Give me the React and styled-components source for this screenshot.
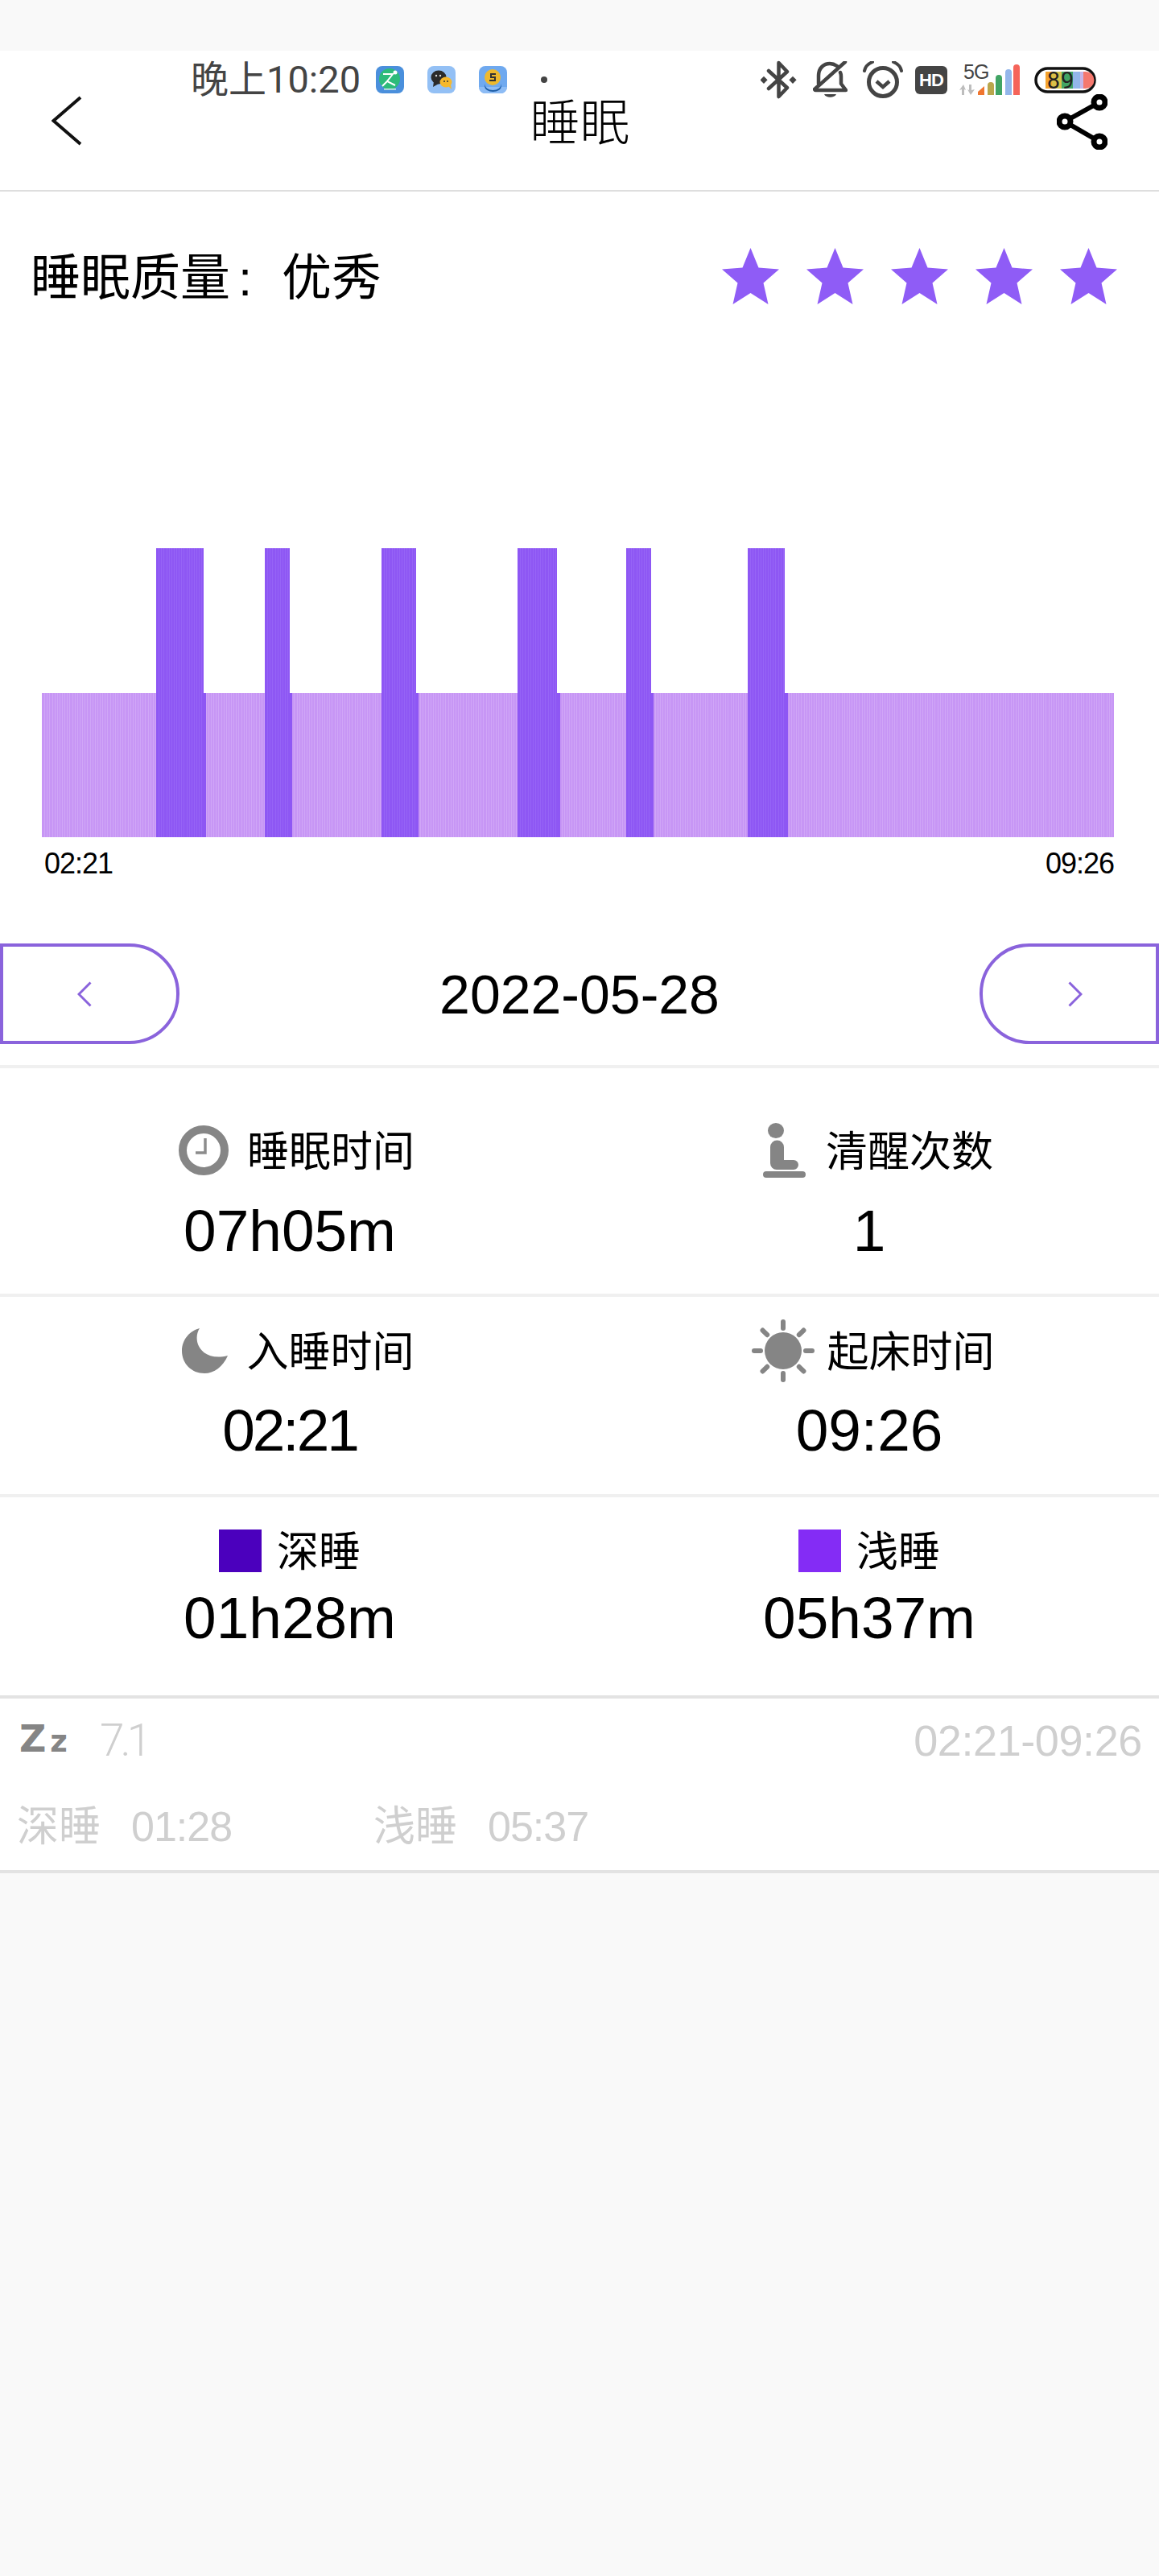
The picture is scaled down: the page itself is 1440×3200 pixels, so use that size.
import React from "react";
import styled, { createGlobalStyle } from "styled-components";

const SANS = `"Liberation Sans", "Noto Sans CJK SC", sans-serif`;

const GlobalStyle = createGlobalStyle`
  html, body {
    margin: 0;
    padding: 0;
    background: #f9f9f9;
    font-family: ${SANS};
    color: #000;
  }
`;

// Page
const Page = styled.div`
  position: relative;
  width: 1440px;
  height: 3200px;
  padding-top: 63px;
  box-sizing: border-box;
  overflow: hidden;
`;

const Sheet = styled.div`
  background: #fff;
`;

// Status bar lies over the app header, like the phone's own overlay
const StatusBar = styled.div`
  position: absolute;
  top: 75px;
  left: 237px;
  width: 1125px;
  height: 48px;
  display: flex;
  align-items: center;
  justify-content: space-between;
`;

const StatusLeft = styled.div`
  display: flex;
  align-items: center;
`;

const StatusTime = styled.span`
  font-family: Roboto, "Noto Sans CJK SC", sans-serif;
  font-size: 47px;
  line-height: 48px;
  color: #444;
  width: 230px;
  white-space: nowrap;
`;

const AppIcons = styled.div`
  display: flex;
  align-items: center;
  gap: 29px;
`;

const StatusDot = styled.span`
  width: 8px;
  height: 8px;
  border-radius: 50%;
  background: #444;
  margin-left: 42px;
`;

const StatusRight = styled.div`
  display: flex;
  align-items: center;
`;

const HdBadge = styled.span`
  width: 40px;
  height: 35px;
  margin: 0 15px;
  border-radius: 6px;
  background: #444;
  color: #fff;
  font-size: 22px;
  font-weight: 700;
  line-height: 35px;
  text-align: center;
  letter-spacing: -1px;
`;

const SignalBox = styled.div`
  position: relative;
  width: 76px;
  height: 42px;
  margin-right: 17px;
`;

const FiveG = styled.span`
  position: absolute;
  left: 5px;
  top: -1px;
  font-size: 25px;
  line-height: 24px;
  color: #444;
  letter-spacing: -1px;
`;

// Header
const Header = styled.header`
  height: 173px;
  padding: 0 64px;
  display: flex;
  align-items: center;
  justify-content: space-between;
  border-bottom: 2px solid #dedede;
`;

const PageTitle = styled.h1`
  margin: 0;
  font-size: 62px;
  font-weight: 300;
  line-height: 62px;
  padding: 8px 0 0 26px;
`;

// Quality
const QualityRow = styled.div`
  padding: 70px 52px 0 38px;
  display: flex;
  align-items: flex-start;
  justify-content: space-between;
`;

const QualityText = styled.div`
  font-size: 62px;
  line-height: 70px;
  white-space: nowrap;
  padding-top: 3px;
`;

const Colon = styled.span`
  display: inline-block;
  width: 64px;
  padding-left: 10px;
  box-sizing: border-box;
`;

const Stars = styled.div`
  display: flex;
  gap: 34px;
`;

// Chart
const ChartWrap = styled.div`
  margin: 300px 56px 0 52px;
  height: 359px;
`;

const ChartLabels = styled.div`
  height: 66px;
  padding: 0 56px 0 55px;
  display: flex;
  align-items: center;
  justify-content: space-between;
  font-size: 36px;
  letter-spacing: -1px;
`;

// Date
const DateRow = styled.div`
  padding: 66px 0 26px;
  display: flex;
  align-items: center;
  justify-content: space-between;
`;

const NavButton = styled.div`
  width: 223px;
  height: 125px;
  box-sizing: border-box;
  border: 4px solid #8a63dc;
  border-radius: ${(p) => (p.$side === "left" ? "0 62px 62px 0" : "62px 0 0 62px")};
  display: flex;
  align-items: center;
  justify-content: center;
  padding: ${(p) => (p.$side === "left" ? "0 14px 0 0" : "0 0 0 14px")};
`;

const DateText = styled.div`
  font-size: 68px;
  line-height: 80px;
`;

const Divider = styled.div`
  height: 4px;
  background: ${(p) => p.$color || "#f0f0f0"};
`;

// Stats
const StatRow = styled.div`
  height: ${(p) => p.$height}px;
  padding-top: ${(p) => p.$top}px;
  box-sizing: border-box;
  display: grid;
  grid-template-columns: 1fr 1fr;
`;

const Stat = styled.div`
  display: flex;
  flex-direction: column;
  align-items: center;
`;

const StatHead = styled.div`
  height: 68px;
  display: flex;
  align-items: center;
  gap: ${(p) => p.$gap || 25}px;
  padding-left: ${(p) => p.$shift || 0}px;
  font-size: 52px;
  white-space: nowrap;
`;

const HeadLabel = styled.span`
  padding-bottom: 6px;
`;

const IconSlot = styled.span`
  width: ${(p) => p.$w}px;
  display: flex;
  justify-content: center;
`;

const Swatch = styled.span`
  width: 53px;
  height: 53px;
  background: ${(p) => p.$color};
`;

const StatValue = styled.div`
  font-size: 73px;
  line-height: 80px;
  margin-top: ${(p) => p.$top}px;
  letter-spacing: ${(p) => p.$tight || 0}px;
`;

// Record list
const Record = styled.div`
  height: 213px;
  box-sizing: border-box;
  padding: 22px 21px 0 21px;
  color: #cfcfcf;
`;

const RecordTop = styled.div`
  height: 60px;
  display: flex;
  align-items: center;
  justify-content: space-between;
`;

const RecordScore = styled.div`
  display: flex;
  align-items: center;
`;

const ZzMark = styled.span`
  width: 103px;
  padding-left: 3px;
  box-sizing: border-box;
  font-family: "DejaVu Sans", sans-serif;
  font-size: 46px;
  font-weight: 700;
  line-height: 60px;
  color: #858585;
  white-space: nowrap;
`;

const SmallZ = styled.span`
  font-size: 37px;
  margin-left: 5px;
`;

const ScoreText = styled.span`
  font-family: Roboto, sans-serif;
  font-size: 55px;
  font-weight: 300;
  letter-spacing: -5px;
`;

const RecordRange = styled.span`
  font-size: 54px;
  line-height: 60px;
  letter-spacing: -0.4px;
`;

const RecordBottom = styled.div`
  height: 60px;
  margin-top: 47px;
  display: flex;
  align-items: center;
`;

const RecordPart = styled.div`
  width: 443px;
  display: flex;
  gap: 38px;
  font-size: 52px;
  line-height: 60px;
  white-space: nowrap;
`;

const RecordTime = styled.span`
  font-size: 52px;
  letter-spacing: -1px;
`;

// Drawings
const MINUTE = 1332 / 425;
const DEEP = [
  [142, 201, 204],
  [277, 307.5, 311],
  [422, 464.5, 468],
  [591, 640, 643.5],
  [726, 757, 760],
  [877, 923, 926.5],
];

function SleepChart() {
  const lines = [];
  for (let i = 1; i < 425; i++) {
    lines.push(<rect key={i} x={Math.round(i * MINUTE)} y="180" width="1" height="179" fill="#d0a6f7" />);
  }
  const deep = [];
  DEEP.forEach(([a, b, c], k) => {
    deep.push(<rect key={`t${k}`} x={a} y="0" width={b - a} height="180" fill="#8e57f4" />);
    deep.push(<rect key={`b${k}`} x={a} y="180" width={c - a} height="179" fill="#8e57f4" />);
    for (let x = a + MINUTE; x < b; x += MINUTE) {
      deep.push(<rect key={`l${k}-${x}`} x={Math.round(x)} y="0" width="1" height="359" fill="#9664f6" />);
    }
  });
  return (
    <svg width="1332" height="359" viewBox="0 0 1332 359" shapeRendering="crispEdges" style={{ display: "block" }}>
      <rect x="0" y="180" width="1332" height="179" fill="#c796f5" />
      {lines}
      {deep}
    </svg>
  );
}

const Star = () => (
  <svg width="71" height="70" viewBox="0 0 71 70">
    <path d="M35.5 0 L45.5 24.5 L71 26.5 L51.5 43.5 L57.5 70 L35.5 56 L13.5 70 L19.5 43.5 L0 26.5 L25.5 24.5 Z" fill="#8f5cf6" />
  </svg>
);

const BackIcon = () => (
  <svg width="38" height="62" viewBox="0 0 38 62">
    <path d="M36 2 L2.5 31 L36 60" fill="none" stroke="#111" strokeWidth="4" />
  </svg>
);

const ShareIcon = () => (
  <svg width="63" height="69" viewBox="0 0 63 69" style={{ marginBottom: -4 }}>
    <path d="M53 10 L10 34 L53 59" fill="none" stroke="#000" strokeWidth="6" />
    <circle cx="53" cy="10" r="7" fill="#fff" stroke="#000" strokeWidth="7" />
    <circle cx="10" cy="34" r="7" fill="#fff" stroke="#000" strokeWidth="7" />
    <circle cx="53" cy="59" r="7" fill="#fff" stroke="#000" strokeWidth="7" />
  </svg>
);

const Chevron = ({ flip }) => (
  <svg width="18" height="32" viewBox="0 0 18 32" style={flip ? { transform: "scaleX(-1)" } : undefined}>
    <path d="M16.5 1.5 L2 16 L16.5 30.5" fill="none" stroke="#8a63dc" strokeWidth="3" />
  </svg>
);

const ClockIcon = () => (
  <svg width="62" height="62" viewBox="0 0 62 62">
    <circle cx="31" cy="31" r="26" fill="none" stroke="#868686" strokeWidth="10" />
    <path d="M33 16 V34 H21" fill="none" stroke="#8c8c8c" strokeWidth="3.5" />
  </svg>
);

const SeatIcon = () => (
  <svg width="53" height="68" viewBox="0 0 53 68">
    <ellipse cx="16" cy="9.5" rx="10" ry="9.5" fill="#858585" />
    <path d="M9 30 a8.5 8.5 0 0 1 17 0 V46 H38 a6 6 0 0 1 6 6 a6 6 0 0 1 -6 6 H17 a8 8 0 0 1 -8 -8 Z" fill="#858585" />
    <rect x="0" y="60" width="53" height="8" rx="4" fill="#858585" />
  </svg>
);

const MoonIcon = () => (
  <svg width="57" height="56" viewBox="0 0 57 56">
    <path d="M22 0 C12 16 24 42 57 34 C51 48 40 56 28 56 C12 56 0 44 0 28 C0 14 10 3 22 0 Z" fill="#858585" />
  </svg>
);

const SunIcon = () => {
  const rays = [0, 45, 90, 135, 180, 225, 270, 315];
  return (
    <svg width="78" height="78" viewBox="0 0 78 78">
      <circle cx="39" cy="39" r="23" fill="#858585" />
      {rays.map((r) => (
        <line key={r} x1="39" y1="3" x2="39" y2="11" stroke="#858585" strokeWidth="6" strokeLinecap="round" transform={`rotate(${r} 39 39)`} />
      ))}
    </svg>
  );
};

const RunApp = () => (
  <svg width="35" height="34" viewBox="0 0 35 34">
    <rect width="35" height="34" rx="8" fill="#4a8fdc" />
    <circle cx="17" cy="16" r="13" fill="#2dbb7a" />
    <circle cx="24" cy="8" r="2.5" fill="#fff" />
    <path d="M9 10 H21 L14 19 L24 24 M14 19 L8 25" fill="none" stroke="#fff" strokeWidth="2" />
    <rect x="10" y="28" width="15" height="1.5" fill="#d8f5e6" />
  </svg>
);

const ChatApp = () => (
  <svg width="35" height="34" viewBox="0 0 35 34">
    <rect width="35" height="34" rx="8" fill="#93c0f5" />
    <ellipse cx="14" cy="14" rx="9.5" ry="8.5" fill="#2b2b2b" />
    <path d="M8 19 L7 26 L14 22 Z" fill="#2b2b2b" />
    <ellipse cx="23" cy="20" rx="7.5" ry="6.5" fill="#f5b82e" />
    <path d="M26 25 L30 29 L29 23 Z" fill="#f5b82e" />
    <circle cx="21" cy="19" r="1" fill="#333" />
    <circle cx="25" cy="19" r="1" fill="#333" />
    <circle cx="11" cy="12" r="1.2" fill="#ddd" />
    <circle cx="16" cy="12" r="1.2" fill="#ddd" />
  </svg>
);

const CoinApp = () => (
  <svg width="35" height="34" viewBox="0 0 35 34">
    <rect width="35" height="34" rx="8" fill="#6fa9ef" />
    <path d="M0 26 H35 V26 a8 8 0 0 1 -8 8 H8 a8 8 0 0 1 -8 -8 Z" fill="#8dbcf5" />
    <path d="M7 22 a10.5 8 0 0 0 21 0 L28 25 a10.5 7 0 0 1 -21 0 Z" fill="#1f5fa8" />
    <circle cx="17" cy="14" r="10" fill="#eeb92e" />
    <path d="M21 10 H15 V14 H20 V18 H13" fill="none" stroke="#333" strokeWidth="2" />
  </svg>
);

const BluetoothIcon = () => (
  <svg width="45" height="48" viewBox="0 0 45 48" style={{ marginRight: 20 }}>
    <path d="M10 13 L33 34 L22.5 45 V3 L33 14 L10 35" fill="none" stroke="#444" strokeWidth="4.5" strokeLinejoin="round" strokeLinecap="round" />
    <rect x="1" y="21" width="6.5" height="6.5" transform="rotate(45 4 24)" fill="#444" />
    <rect x="37" y="21" width="6.5" height="6.5" transform="rotate(45 40 24)" fill="#444" />
  </svg>
);

const BellOffIcon = () => (
  <svg width="43" height="46" viewBox="0 0 43 46" style={{ marginRight: 19 }}>
    <path d="M7 28 V18 C7 8 14 3 21 3 C24 3 27 4 30 6 M34 14 C35 16 35 17 35 19 V28 L41 36 H3" fill="none" stroke="#444" strokeWidth="4.5" strokeLinejoin="round" strokeLinecap="round" />
    <path d="M2 35 L40 1" stroke="#444" strokeWidth="4.5" strokeLinecap="round" />
    <path d="M14 41 H29 C27 46 16 46 14 41 Z" fill="#444" />
  </svg>
);

const AlarmIcon = () => (
  <svg width="50" height="46" viewBox="0 0 50 46">
    <circle cx="25" cy="26" r="17.5" fill="none" stroke="#444" strokeWidth="5" />
    <path d="M17 25 L25 32 L33 25" fill="none" stroke="#444" strokeWidth="4.5" />
    <path d="M2 12 C3 7 7 3 12 1 M48 12 C47 7 43 3 38 1" fill="none" stroke="#444" strokeWidth="4" strokeLinecap="round" />
  </svg>
);

const SignalBars = () => {
  const bars = [
    [35, 24, "#b9a64c"],
    [45, 15, "#41a464"],
    [57, 8, "#93b6ea"],
    [67, 2, "#f5645a"],
  ];
  return (
    <svg width="76" height="42" viewBox="0 0 76 42" style={{ position: "absolute", left: 0, top: 0 }}>
      <path d="M3 40 V33 L0 34 L5 27 L8 34 L6 33 V40 Z M12 27 V34 L10 33 L14 40 L19 33 L15 34 V27 Z" fill="#bdbdbd" />
      <path d="M23 40 V36 L31 29 V40 Z" fill="#f0762f" />
      {bars.map(([x, y, c]) => (
        <path key={x} d={`M${x} 40 V${y + 4} a4 4 0 0 1 8 0 V40 Z`} fill={c} />
      ))}
    </svg>
  );
};

const BatteryIcon = () => (
  <svg width="77" height="33" viewBox="0 0 77 33">
    <rect x="2" y="2" width="73" height="29" rx="14.5" fill="#fff" stroke="#111" strokeWidth="3.5" />
    <rect x="14" y="6" width="8" height="21" fill="#f5a32e" />
    <rect x="22" y="6" width="12" height="21" fill="#d7c24a" />
    <rect x="34" y="6" width="14" height="21" fill="#41a464" />
    <rect x="48" y="6" width="9" height="21" fill="#93b6ea" />
    <rect x="57" y="6" width="4" height="21" fill="#c5b5e8" />
    <path d="M61 6 H64 a10.5 10.5 0 0 1 0 21 H61 Z" fill="#f5786e" />
    <text x="33" y="27" textAnchor="middle" fontSize="29" fontFamily="Roboto, sans-serif" fill="#222" letterSpacing="1">89</text>
  </svg>
);

export default function App() {
  return (
    <Page>
      <GlobalStyle />

      <StatusBar>
        <StatusLeft>
          <StatusTime>晚上10:20</StatusTime>
          <AppIcons>
            <RunApp />
            <ChatApp />
            <CoinApp />
          </AppIcons>
          <StatusDot />
        </StatusLeft>
        <StatusRight>
          <BluetoothIcon />
          <BellOffIcon />
          <AlarmIcon />
          <HdBadge>HD</HdBadge>
          <SignalBox>
            <SignalBars />
            <FiveG>5G</FiveG>
          </SignalBox>
          <BatteryIcon />
        </StatusRight>
      </StatusBar>

      <Sheet>
        <Header>
          <BackIcon />
          <PageTitle>睡眠</PageTitle>
          <ShareIcon />
        </Header>

        <QualityRow>
          <QualityText>
            睡眠质量<Colon>:</Colon>优秀
          </QualityText>
          <Stars>
            <Star />
            <Star />
            <Star />
            <Star />
            <Star />
          </Stars>
        </QualityRow>

        <ChartWrap>
          <SleepChart />
        </ChartWrap>
        <ChartLabels>
          <span>02:21</span>
          <span>09:26</span>
        </ChartLabels>

        <DateRow>
          <NavButton $side="left">
            <Chevron />
          </NavButton>
          <DateText>2022-05-28</DateText>
          <NavButton $side="right">
            <Chevron flip />
          </NavButton>
        </DateRow>
        <Divider />

        <StatRow $height={280} $top={68}>
          <Stat>
            <StatHead $shift={17} $gap={23}>
              <IconSlot $w={62}>
                <ClockIcon />
              </IconSlot>
              <HeadLabel>睡眠时间</HeadLabel>
            </StatHead>
            <StatValue $top={26}>07h05m</StatValue>
          </Stat>
          <Stat>
            <StatHead $shift={22}>
              <IconSlot $w={53}>
                <SeatIcon />
              </IconSlot>
              <HeadLabel>清醒次数</HeadLabel>
            </StatHead>
            <StatValue $top={26}>1</StatValue>
          </Stat>
        </StatRow>
        <Divider />

        <StatRow $height={245} $top={33}>
          <Stat>
            <StatHead $shift={21} $gap={23}>
              <IconSlot $w={57}>
                <MoonIcon />
              </IconSlot>
              <HeadLabel>入睡时间</HeadLabel>
            </StatHead>
            <StatValue $top={25} $tight={-3}>
              02:21
            </StatValue>
          </Stat>
          <Stat>
            <StatHead $gap={15} $shift={10}>
              <IconSlot $w={78}>
                <SunIcon />
              </IconSlot>
              <HeadLabel>起床时间</HeadLabel>
            </StatHead>
            <StatValue $top={25}>09:26</StatValue>
          </Stat>
        </StatRow>
        <Divider />

        <StatRow $height={246} $top={32}>
          <Stat>
            <StatHead $gap={19}>
              <Swatch $color="#4b00bd" />
              <HeadLabel>深睡</HeadLabel>
            </StatHead>
            <StatValue $top={10}>01h28m</StatValue>
          </Stat>
          <Stat>
            <StatHead $gap={19}>
              <Swatch $color="#842cf5" />
              <HeadLabel>浅睡</HeadLabel>
            </StatHead>
            <StatValue $top={10}>05h37m</StatValue>
          </Stat>
        </StatRow>
        <Divider $color="#e3e3e3" />

        <Record>
          <RecordTop>
            <RecordScore>
              <ZzMark>
                Z<SmallZ>z</SmallZ>
              </ZzMark>
              <ScoreText>7.1</ScoreText>
            </RecordScore>
            <RecordRange>02:21-09:26</RecordRange>
          </RecordTop>
          <RecordBottom>
            <RecordPart>
              <span>深睡</span>
              <RecordTime>01:28</RecordTime>
            </RecordPart>
            <RecordPart>
              <span>浅睡</span>
              <RecordTime>05:37</RecordTime>
            </RecordPart>
          </RecordBottom>
        </Record>
        <Divider $color="#e3e3e3" />
      </Sheet>
    </Page>
  );
}
